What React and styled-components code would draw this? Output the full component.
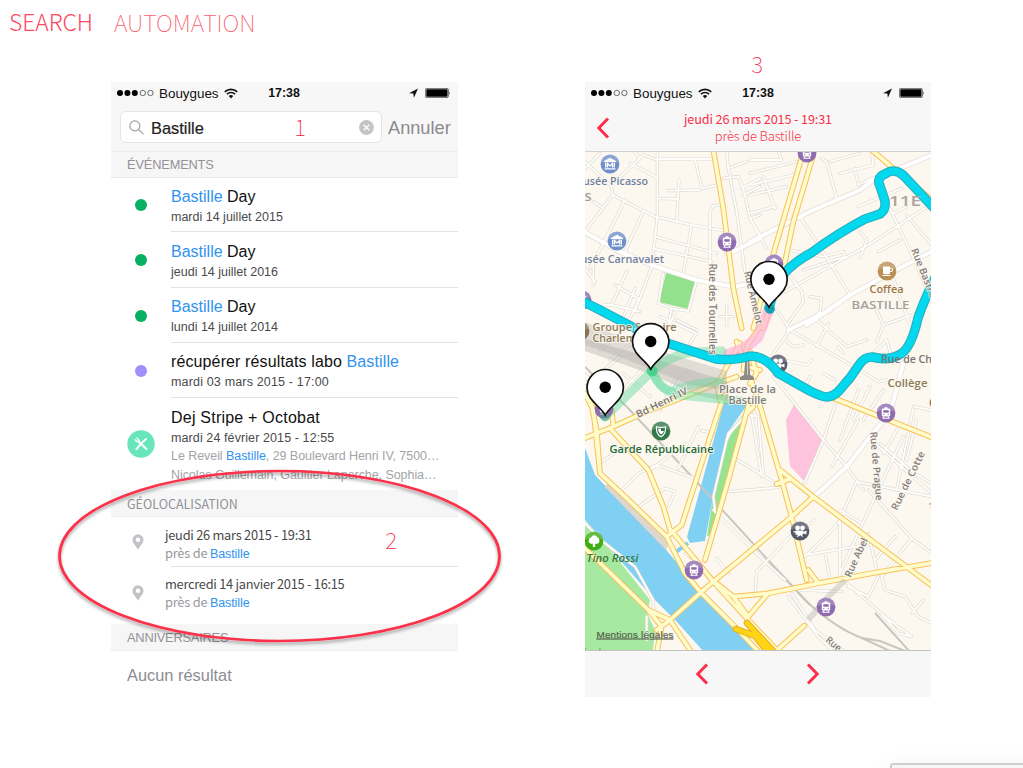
import React from "react";
import styled, { createGlobalStyle } from "styled-components";

const RED = "#fb3048";
const SOURCE = '"Noto Sans CJK SC", "Open Sans", sans-serif';
const HELV = '"Liberation Sans", Arial, sans-serif';

const Global = createGlobalStyle`
  * { box-sizing: border-box; }
  html, body { margin: 0; padding: 0; background: #fff; overflow: hidden; }
  body { font-family: ${HELV}; }
  svg { display: block; }
`;

const Page = styled.main`
  position: relative;
  width: 1023px;
  height: 768px;
  overflow: hidden;
  background: #fff;
`;

const TopNav = styled.nav`
  display: flex;
  gap: 21px;
  height: 82px;
  padding: 6px 0 0 9px;
`;

const NavItem = styled.a`
  font: ${(p) => (p.$active ? 300 : 100)} ${(p) => (p.$active ? 22.8 : 23.4)}px/32px ${SOURCE};
  color: ${(p) => (p.$active ? "#fb4a5e" : "#fb5c6e")};
`;

const Screens = styled.div`
  display: flex;
  gap: 127px;
  padding-left: 111px;
`;

const Phone = styled.section`
  display: flex;
  flex-direction: column;
  width: ${(p) => p.$width}px;
  height: 615px;
  background: #fff;

  > * {
    flex-shrink: 0;
  }
`;

const Head = styled.header`
  height: ${(p) => p.$height}px;
  background: #f7f7f7;
  border-bottom: 1px solid ${(p) => p.$line};
`;

const StatusBar = styled.div`
  display: grid;
  grid-template-columns: 1fr auto 1fr;
  align-items: center;
  height: 22px;
  padding: 0 ${(p) => p.$right}px 0 6px;
  color: #111;
  font-size: 13.4px;
`;

const Carrier = styled.div`
  display: flex;
  align-items: center;
  gap: 5px;
`;

const Clock = styled.span`
  font-weight: 700;
  font-size: 12.4px;
`;

const Indicators = styled.div`
  display: flex;
  align-items: center;
  justify-content: flex-end;
  gap: 7px;
`;

const SearchRow = styled.div`
  display: flex;
  align-items: center;
  gap: 6px;
  padding: 7px 0 0 9px;
`;

const SearchField = styled.div`
  display: flex;
  align-items: center;
  width: 262px;
  height: 32px;
  padding: 0 7px 0 8px;
  border: 1px solid #e4e4e6;
  border-radius: 6px;
  background: #fff;
`;

const Query = styled.span`
  flex: 1;
  padding: 2px 0 0 7px;
  font-size: 16.4px;
  color: #222;
  -webkit-text-stroke: 0.2px #222;
`;

const Cancel = styled.span`
  padding-top: 2px;
  font-size: 18.2px;
  color: #8a8a8f;
`;

const SectionTitle = styled.h2`
  display: flex;
  align-items: center;
  height: ${(p) => p.$height}px;
  margin: 0;
  padding: 1px 0 0 16px;
  background: #f6f6f6;
  border-bottom: 1px solid #ececec;
  font: 400 ${(p) => p.$size || 12.8}px/20px ${(p) => p.$font || HELV};
  letter-spacing: ${(p) => p.$track || 0}px;
  color: #929297;
`;

const Row = styled.article`
  display: grid;
  grid-template-columns: 60px 1fr;
  height: ${(p) => p.$height}px;
`;

const Marker = styled.div`
  display: flex;
  align-items: center;
  justify-content: center;
  padding-right: ${(p) => p.$inset || 0}px;
  padding-bottom: ${(p) => p.$lift || 0}px;
`;

const Dot = styled.i`
  width: 12px;
  height: 12px;
  border-radius: 50%;
  background: ${(p) => p.$color};
`;

const Details = styled.div`
  padding-top: ${(p) => p.$top || 9}px;
  border-bottom: ${(p) => (p.$last ? 0 : 1)}px solid #e3e3e5;
  white-space: nowrap;
`;

const Title = styled.div`
  font-size: 16px;
  line-height: 20px;
  letter-spacing: ${(p) => p.$track || 0}px;
  color: #111;
`;

const When = styled.div`
  font-size: 12.5px;
  line-height: 20px;
  letter-spacing: ${(p) => p.$track || 0}px;
  color: #4a4a4c;
`;

const Extra = styled.div`
  position: relative;
  top: -1px;
  font-size: 12.5px;
  line-height: 18.5px;
  letter-spacing: -0.06px;
  color: #a3a3a8;
`;

const Hit = styled.span`
  color: #2f93f0;
`;

const GeoText = styled.div`
  margin-left: -6px;
  font: 400 12.8px/18px ${SOURCE};
  letter-spacing: ${(p) => p.$track || 0}px;
  color: ${(p) => (p.$muted ? "#98989d" : "#484848")};
`;

const GeoHit = styled(Hit)`
  font: 400 12.5px/18px ${HELV};
  letter-spacing: -0.1px;
`;

const Empty = styled.p`
  margin: 0;
  padding: 14px 16px 0;
  font-size: 16.4px;
  line-height: 20px;
  color: #8c8c91;
`;

const TitleBar = styled.div`
  display: grid;
  grid-template-columns: 36px 1fr 36px;
  align-items: center;
  padding-top: 7px;
`;

const PlaceTitle = styled.div`
  text-align: center;
  font: 400 12.7px/16.5px ${SOURCE};
  letter-spacing: -0.15px;
  color: ${RED};
`;

const PlaceSub = styled.div`
  font-size: 13px;
  font-weight: 300;
`;

const BackSlot = styled.div`
  display: flex;
  padding: 0 0 0 11px;
`;

const Footer = styled.footer`
  display: flex;
  align-items: center;
  justify-content: center;
  gap: 97px;
  height: 47px;
  padding-right: 2px;
  border-top: 1px solid #c4c4c4;
  background: #f7f7f7;
`;

const Note = styled.span`
  position: absolute;
  left: ${(p) => p.$x}px;
  top: ${(p) => p.$y}px;
  width: 20px;
  text-align: center;
  font: 100 22.5px/32px ${SOURCE};
  color: #f4203c;
`;

const Highlight = styled.svg`
  position: absolute;
  left: 50px;
  top: 460px;
`;

const WindowEdge = styled.div`
  position: absolute;
  left: 890px;
  top: 763px;
  width: 160px;
  height: 40px;
  border: 2px solid #cfcfcf;
  border-radius: 3px;
  background: #f6f6f6;
  box-shadow: 0 4px 26px rgba(0, 0, 0, 0.07);
`;

/* ---------- icons ---------- */

const SignalDots = () => (
  <svg width="37" height="8" viewBox="0 0 37 8">
    {[0, 1, 2].map((i) => <circle key={i} cx={3 + i * 7.4} cy="4" r="3" fill="#000" />)}
    {[3, 4].map((i) => <circle key={i} cx={3 + i * 7.6} cy="4" r="2.7" fill="none" stroke="#333" strokeWidth=".7" />)}
  </svg>
);

const Wifi = () => (
  <svg width="14" height="11" viewBox="0 0 14 11" fill="none" stroke="#111" strokeWidth="1.7">
    <path d="M.8 3.9a8.8 8.8 0 0 1 12.4 0" />
    <path d="M3 6.2a5.6 5.6 0 0 1 8 0" />
    <path d="M7 10.4 4.8 8.1a3.1 3.1 0 0 1 4.4 0z" fill="#111" stroke="none" />
  </svg>
);

const LocationArrow = () => (
  <svg width="9" height="10" viewBox="0 0 9 10"><path d="M9 .4 0 5.2l4.3.4.6 4.2z" fill="#111" /></svg>
);

const Battery = () => (
  <svg width="26" height="10" viewBox="0 0 26 10">
    <rect x=".4" y=".4" width="23" height="9.2" rx="1.4" fill="none" stroke="#333" strokeWidth=".7" />
    <rect x="1.3" y="1.3" width="21.2" height="7.4" rx=".6" fill="#000" />
    <path d="M24.3 3.2q1.4 1.8 0 3.6z" fill="#222" />
  </svg>
);

const Magnifier = () => (
  <svg width="15" height="15" viewBox="0 0 15 15" fill="none" stroke="#a0a0a5" strokeWidth="1.2">
    <circle cx="5.9" cy="5.9" r="5" />
    <path d="m9.5 9.5 5 4.6" />
  </svg>
);

const Clear = () => (
  <svg width="15" height="15" viewBox="0 0 15 15">
    <circle cx="7.5" cy="7.5" r="7.4" fill="#c3c3c8" />
    <path d="m4.7 4.7 5.6 5.6m0-5.6-5.6 5.6" stroke="#fff" strokeWidth="1.3" />
  </svg>
);

const Chevron = ({ flip }) => (
  <svg width="14" height="24" viewBox="0 0 14 24">
    <path d={flip ? "M2 2.5 11.2 12 2 21.5" : "M12 2.5 2.8 12l9.2 9.5"} fill="none" stroke={RED} strokeWidth="3" />
  </svg>
);

const Lunch = () => (
  <svg width="28" height="28" viewBox="0 0 28 28">
    <circle cx="14" cy="14" r="13.7" fill="#68e6bb" />
    <g fill="none" stroke="#fff" strokeLinecap="round">
      <path d="M19 9q-5 4-9.700 10.300" strokeWidth="2" />
      <path d="m11.500 11.500 8 7.500" strokeWidth="2" />
      <path d="M8 9.600 10.500 12M9.800 7.900l2.700 2.600M8.700 10.700l3 1.500.4-.8-1.700-2.900" strokeWidth="1.100" />
    </g>
  </svg>
);

const GrayPin = () => (
  <svg width="12" height="16" viewBox="0 0 12 16">
    <path d="M6 .3a5.500 5.500 0 0 0-5.500 5.600C.5 9 3.400 10.800 6 15.700 8.600 10.800 11.500 9 11.500 5.900A5.500 5.500 0 0 0 6 .3zm0 3.200a2.300 2.300 0 1 1 0 4.600 2.300 2.300 0 0 1 0-4.600z" fill="#c2c2c7" fillRule="evenodd" />
  </svg>
);

/* ---------- map ---------- */

/* Street network, split in tiles; each tile is drawn at three units per pixel. */
const TILES = [
  {
    x: 580, y: 145,
    minor: "M15 50L95 125L98 150L225 215L335 240L440 258M98 150L15 260M15 70L60 25M232 20V215L215 365M95 120L190 30L232 45M150 55L232 98M180 40L160 15M232 42L395 42M345 42L365 130L415 120M265 137L360 135M297 105L290 225M232 160L295 162M135 165L75 285L30 370M190 200L135 320M225 275L410 325M225 312L395 350M335 240L310 385M390 360V200L400 182L430 180M430 100L475 95L490 130L510 220L540 270M440 20L445 70L470 200L495 380M445 70L500 50M485 130L540 100M490 150L540 125M510 220L540 210M215 365L180 460L145 530M105 420L175 460L165 500M140 380L95 480L180 500M165 430L120 540M350 405L325 498L275 490L235 475L250 385M275 490L265 540M15 370L45 410M40 340L40 420M40 170L70 190M440 480V540M420 515H460M95 480L70 480",
    major: "M15 262L120 320L215 360L350 405L460 425L540 410M540 280L470 315L440 325",
    yellow: "M400 15L430 190L460 430L485 550",
  },
  {
    x: 750, y: 145,
    minor: "M0 85L140 50M5 120L130 90M0 150L110 125M0 45L95 45L85 20M40 95L75 190M0 205L75 185M215 40L230 50L260 160M270 85L370 60L365 20M240 50L330 25M315 70L325 120L365 100M150 215L225 330L300 450M115 315L220 335L280 320L285 335L160 375M105 440L355 300L540 180M330 260L350 285L330 340M385 320L450 285M0 220L50 310M325 185L455 130M345 220L415 180M415 180L500 360L545 470M110 380L155 440L160 470L110 540M180 455L215 460L210 500L170 540M430 400L480 540M470 210L545 300M430 205L470 185",
    major: "M0 290L190 195L330 135L375 100L545 30M170 540L300 450L420 385L543 320",
    yellow: "M160 20L75 310L10 550M190 30L130 230L105 350L40 550M365 15L430 70L545 165",
  },
  {
    x: 580, y: 310,
    minor: "M15 180L90 260M60 120L130 60M90 150L180 80M120 250L230 130M130 190L210 260M240 20L350 70L330 100M350 60L290 30M290 0L250 80M320 180L250 280M290 200L240 300M15 220L60 190L120 140M400 370L365 362M500 310L450 370L440 390",
    yellow: "M15 384L100 350L200 305L400 225L470 200M15 250L40 300L60 490M30 262L50 360L60 490M95 300L100 345M480 100L440 170L412 225L420 270M540 50L500 110L490 180M470 95L500 170L540 180M520 290L500 310",
  },
  {
    x: 750, y: 310,
    minor: "M70 200L220 390L290 470L340 540M163 520L220 390L260 270M245 470L325 330M50 160L120 60L80 0M120 60L330 180L385 215L410 210M190 20L290 110L350 90M235 40L200 110M380 0L400 45L380 95M400 45L500 10M105 90L130 110L160 105M100 150L170 165L185 150M220 190L255 210M265 110L280 130M180 200L160 240M325 240L270 390M360 230L310 330M400 240L340 330M210 290L240 250M390 400L480 480L543 520M450 345L400 430M490 295L440 540M490 290L543 300M500 330L470 450M0 315L25 320L40 490M430 160L410 90L370 130M0 290L20 320",
    major: "M115 60L240 0M215 540L290 470L360 380L420 310L460 160",
    yellow: "M250 264L545 382M0 205L25 270M0 125L20 190L0 220",
  },
  {
    x: 585, y: 400,
    minor: "M450 175L580 255M500 45L530 230M430 275L580 262M45 190L100 150M110 270L160 220L215 195L330 235M160 320L240 265L270 275L250 320M190 215L300 130M280 205L340 80M385 330L545 490L600 540M395 475L430 520M300 460L340 490M510 590L515 515L620 405L690 360M850 270L980 415L1040 460M870 130L1040 280M955 110L870 290L765 520M815 245L1040 290M815 245L760 370M765 330L830 370M765 330V540M755 375L660 470M660 465L840 435M720 455L735 540M850 400L880 530L850 590L790 560M980 415L890 530L900 570L960 590L1000 650L1040 670M780 545L900 650L980 710L940 700L890 640M930 410L870 480M610 590L700 710L740 750M620 580L690 690L780 755M640 570L770 575M1015 600L980 640M0 370L60 430L150 500L205 600V650M185 650V720M480 50L430 100L385 290L390 330",
    major: "M685 290L715 265",
    yellow: "M45 220L120 290L245 410L300 520L350 580L450 680L530 765M75 85L190 210L235 320L258 400M420 -15L405 20L340 220L290 375L245 410M258 390L385 545L485 655L580 755M492 10L430 240L360 480M520 0L590 240L620 350L665 540M585 210L685 290L870 430L1045 560M575 252L612 238M-5 440L190 630L255 660L325 765M190 630L230 680L215 760M255 660L215 690M255 660L350 575L385 545L500 450L620 350L685 290M395 550L445 590L550 580L700 550L870 518L1045 488M445 590L490 650L545 585M670 510L700 550M582 745L658 677",
  },
];

const ROAD_PASSES = [
  { kind: "minor", color: "#dedad3", width: 9.5 },
  { kind: "major", color: "#e2ddd4", width: 16 },
  { kind: "minor", color: "#fffefb", width: 5.5 },
  { kind: "major", color: "#ffffff", width: 12 },
  { kind: "yellow", color: "#f9c056", width: 17 },
  { kind: "yellow", color: "#fffccb", width: 11 },
];

const RAILS = [
  "M627 407L695 480L768 560L805 600Q835 628 862 638L890 651",
  "M585 367L627 407M875 613L910 652M862 638L880 641L905 651",
  "M765 557L810 605",
];

const ROUTE =
  "M769 308C772 296 776 286 783 275C789 267 800 259 811 253C830 239 846 229 865 219L880 214Q886 210 885 201L880 186C877 180 880 176 885 174C892 169 899 171 904 176L936 210M936 276C929 291 924 300 918 318C914 336 908 351 899 355Q888 361 872 357Q864 357 859 365L850 378C842 386 838 396 827 397Q822 397 810 391L778 373Q766 356 750 356Q734 361 716 359L667 343L640 331L598 309L582 301";

const POI_COLORS = { museum: "#6f8fcb", train: "#8f6bb0", coffee: "#b98f54", camera: "#525866", shield: "#34784a", tree: "#3fae14", school: "#8a7352" };

const POIS = [
  ["museum", 610, 164], ["museum", 617, 241], ["train", 727, 242], ["train", 807, 153],
  ["train", 774, 264], ["train", 886, 413], ["train", 694, 570], ["train", 826, 607],
  ["train", 604, 409], ["train", 582, 300], ["coffee", 887, 271], ["camera", 778, 364],
  ["camera", 800, 531], ["shield", 661, 431], ["tree", 594, 541], ["school", 580, 331],
];

const Glyph = ({ kind }) => {
  switch (kind) {
    case "museum":
      return (
        <g fill="#fff">
          <path d="M0-6.200 6-3v1.200H-6V-3zM-5.500 4.200h11v1.400h-11zM-5-1h1.500v4.600H-5zM3.500-1H5v4.600H3.500z" />
          <path d="M-2.400 3.500v-4L0 2l2.400-2.500v4" fill="none" stroke="#fff" strokeWidth="1.200" />
        </g>
      );
    case "train":
      return (
        <g>
          <path d="M-1.500-5.800h3v1.300H3q1.200 0 1.200 1.200v5.500Q4.200 3.500 3 3.500h-6q-1.200 0-1.200-1.300v-5.500q0-1.200 1.200-1.200h1.500zM-3.800 5.800l1-2h1.300l-.5 1h4l-.5-1h1.300l1 2z" fill="#fff" />
          <path d="M-2.700-2.800h5.400v2.500h-5.400z" fill="#8f6bb0" />
          <circle cx="-2.200" cy="1.600" r=".7" fill="#8f6bb0" /><circle cx="2.200" cy="1.600" r=".7" fill="#8f6bb0" />
        </g>
      );
    case "coffee":
      return (
        <g>
          <path d="M-4-4.500h7V2Q3 3.300 1.500 3.300h-4Q-4 3.300-4 2zM-4.500 4h8v1.100h-8z" fill="#fff" />
          <path d="M3-2.800h1.200q1.400 0 1.400 1.500T4.200.4H3" fill="none" stroke="#fff" strokeWidth="1.100" />
        </g>
      );
    case "camera":
      return (
        <g fill="#fff">
          <circle cx="-2.400" cy="-3" r="2.400" /><circle cx="2.500" cy="-3" r="2.400" />
          <path d="M-4.500-.5h7.700v1.300L6.500-.6v4L3.200 2.200v1.600h-1.500l1.600 2H2L.5 4.300-2 5.800h-1.500l1.600-2h-2.600zM-6.500.3h2v1.200h-2z" />
        </g>
      );
    case "shield":
      return (
        <g fill="none" stroke="#fff">
          <path d="M-4.500-4.300Q0-2.800 4.500-4.300C5 1 3.500 3.800 0 5.800-3.500 3.800-5 1-4.500-4.300z" strokeWidth="1.200" />
          <path d="M0-2.500Q-1.500-2-3-2.300-3 1 0 3.500zM0 0h3Q2.500 2.300 0 3.500z" fill="#fff" stroke="none" />
        </g>
      );
    case "tree":
      return <path d="M-1.200 6V2.500Q-3 3.300-4.500 2T-5-1.500Q-4.500-3.500-2.700-3.700-1.800-6 .5-5.800T3.400-3.500Q5.500-3 5.500-.5T3.500 2.600Q2.200 3.200 1.200 2.500V6z" fill="#fff" />;
    default:
      return null;
  }
};

const Poi = ({ kind, x, y }) => (
  <g transform={`translate(${x} ${y})`}>
    <circle r="9.400" fill={POI_COLORS[kind]} />
    <path d="M-9-1.500A9 9 0 0 1 9-1.500Q0-4 -9-1.500z" fill="#fff" opacity=".2" />
    <Glyph kind={kind} />
  </g>
);

const Pin = ({ x, y }) => (
  <g transform={`translate(${x} ${y})`}>
    <path d="M0 27.800C-5 18.500-18.200 13-18.200.4a18.200 18.200 0 1 1 36.400 0C18.200 13 5 18.500 0 27.800z" fill="#fff" stroke="#111" strokeWidth="1.700" />
    <circle r="5.700" fill="#000" />
  </g>
);

const MapLabel = styled.text`
  font-family: "Open Sans", Lato, sans-serif;
  font-weight: 600;
  font-size: ${(p) => p.$size || 9.8}px;
  font-style: ${(p) => (p.$italic ? "italic" : "normal")};
  fill: ${(p) => p.$color || "#85817d"};
  paint-order: stroke;
  stroke: #fdf9f2;
  stroke-opacity: ${(p) => (p.$plain ? 0 : 0.75)};
  stroke-width: 2px;
`;

const LegalLink = styled.text`
  font: 400 9.800px ${HELV};
  fill: #55604f;
  stroke: #55604f;
  stroke-width: 0.2px;
  text-decoration: underline;
`;

const LABELS = [
  { t: "usée Picasso", x: 583, y: 185, w: 65, c: "#7280a0" },
  { t: "S", x: 584.5, y: 201, w: 7, c: "#9d9a96", plain: true },
  { t: "usée Carnavalet", x: 580.5, y: 262.5, w: 83.5, c: "#7280a0" },
  { t: "11E", x: 889, y: 205.5, w: 32, c: "#aaa59f", s: 15, plain: true },
  { t: "Coffea", x: 869.5, y: 293, w: 34, c: "#9a7742" },
  { t: "BASTILLE", x: 851.5, y: 309, w: 58, c: "#a5a19b", s: 10.5, plain: true },
  { t: "Groupe Scolaire", x: 592.5, y: 331, w: 84, c: "#8d7b58" },
  { t: "Charlemagne", x: 592.5, y: 342, w: 68, c: "#8d7b58" },
  { t: "Place de la", x: 719, y: 392.5, w: 57, c: "#7f7c79" },
  { t: "Bastille", x: 728.5, y: 403.500, w: 38, c: "#7f7c79" },
  { t: "Garde Républicaine", x: 609.5, y: 453, w: 104, c: "#246b38" },
  { t: "Collège", x: 887.5, y: 387, w: 40, c: "#8d7b58" },
  { t: "Tino Rossi", x: 586.5, y: 562, w: 52, c: "#37793b", it: true, plain: true },
  { t: "Rue de Ch", x: 881, y: 363, w: 51, c: "#77736f", over: true, plain: true },
  { t: "(", x: 929, y: 406, w: 5, c: "#8d7b58" },
  { t: "Bd Henri IV", x: 638, y: 418, w: 56, c: "#77736f", r: -26, s: 10 },
  { t: "Rue des Tournelles", x: 709, y: 263.5, w: 91, c: "#858079", r: 90 },
  { t: "Rue Amelot", x: 744, y: 272, w: 54, c: "#858079", r: 77 },
  { t: "Rue Basfroi", x: 911, y: 250, w: 55, c: "#858079", r: 68 },
  { t: "Rue de Prague", x: 870, y: 432, w: 69, c: "#858079", r: 85 },
  { t: "Rue de Cotte", x: 897, y: 511, w: 64, c: "#858079", r: -64 },
  { t: "Rue Abel", x: 850.5, y: 578, w: 42, c: "#858079", r: -65 },
  { t: "Rue", x: 825, y: 641, w: 17, c: "#858079", r: 40 },
  { t: "Rue", x: 929, y: 503, w: 17, c: "#858079", r: 70 },
  { t: "Plantes", x: 577, y: 656, w: 36, c: "#3c7f3e", plain: true },
];

const tileTransform = (tile) => `translate(${tile.x} ${tile.y}) scale(.33333)`;

const ParisMap = () => (
  <svg width="346" height="498" viewBox="585 152 346 498">
    <rect x="585" y="152" width="346" height="498" fill="#fcf7ef" />
    <path d="M666 273L696 281L688 309L659 302z" fill="#93e08d" />
    <path d="M585 522L605 543L650 600L647 613L655 630L653 650H585z" fill="#a7e9a0" />
    <path d="M795 402.500L823.500 440L804.500 481.500L790 466L786 420z" fill="#fec3dd" />
    <path d="M585 448L595 475L668 552L702 593L760 652H704L677 622L655 600L605 543L585 520z" fill="#80d0f3" />
    <path d="M604 486L612 484L668 540L666 550z" fill="#dcd8d1" stroke="#c9c5be" strokeWidth=".6" />
    <path d="M724 402L747 405L728 432L712 503L705 541L690 543L687 537z" fill="#80d0f3" />
    <path d="M747 410L728 433L713 497L707 536L712 535L720 507L748 417z" fill="#98e38f" />
    <path d="M676 552L688 543" stroke="#80d0f3" strokeWidth="4" />
    {RAILS.map((d) => <path key={d} d={d} fill="none" stroke="#c9c6c2" strokeWidth="2" />)}
    {ROAD_PASSES.map((pass) => (
      <g key={pass.kind + pass.color} fill="none" stroke={pass.color} strokeWidth={pass.width} strokeLinejoin="round" strokeLinecap="round">
        {TILES.filter((t) => t[pass.kind]).map((t) => <path key={t.x + "-" + t.y} d={t[pass.kind]} transform={tileTransform(t)} />)}
      </g>
    ))}
    <path d="M808 620L828 597L845 580" fill="none" stroke="#bdb9b5" strokeWidth="6" opacity=".45" />
    <path d="M585 339L625 350L727 381L729 402L700 396L645 372L585 351z" fill="#aaa6a2" opacity=".36" />
    <path d="M585 322L640 345L727 371L727 390L690 385L620 357L585 345z" fill="#aaa6a2" opacity=".33" />
    <g fill="none" strokeLinecap="round">
      <path d="M736 629L755 636L768 652M747 623L774 652" stroke="#dfa51c" strokeWidth="6.500" />
      <path d="M736 629L755 636L768 652M747 623L774 652" stroke="#ffd416" strokeWidth="4.800" />
      <path d="M769 309L758 337Q745 350 729 354" stroke="#ffaeda" strokeWidth="11" opacity=".65" />
    </g>
    <g fill="none" stroke="#4fd996" strokeWidth="9" strokeLinecap="round" opacity=".4">
      <path d="M605 417L652 371Q674 353 695 352L722 351" />
      <path d="M652 371Q660 391 680 395L740 401" />
    </g>
    <path d="M652 371Q660 391 672 391Q700 380 724 382" fill="none" stroke="#4fd996" strokeWidth="8.500" opacity=".35" />
    <circle cx="652" cy="371" r="5.500" fill="#22cc79" opacity=".6" />
    <path d="M745.500 357h3.500l1.200 18 3.800 2v3h-14v-3l4-2z" fill="#8e8a86" />
    <path d="M747.500 360v15" stroke="#cfccc8" strokeWidth="1.200" />
    {POIS.map(([kind, x, y]) => <Poi key={kind + x + y} kind={kind} x={x} y={y} />)}
    <g fill="none" strokeLinejoin="round" strokeLinecap="round">
      <path d={ROUTE} stroke="#13a9bb" strokeWidth="9.600" opacity=".92" />
      <path d={ROUTE} stroke="#00dcf2" strokeWidth="7.400" opacity=".92" />
    </g>
    <circle cx="770" cy="309" r="4.800" fill="#129fb4" />
    <circle cx="605" cy="416" r="5" fill="#4d9b84" opacity=".6" />
    {LABELS.map((l) => (
      <MapLabel
        key={l.t + l.x}
        x={l.x}
        y={l.y}
        textLength={l.w}
        lengthAdjust="spacingAndGlyphs"
        transform={l.r ? `rotate(${l.r} ${l.x} ${l.y})` : undefined}
        $color={l.c}
        $size={l.s}
        $italic={l.it}
        $plain={l.plain}
      >
        {l.t}
      </MapLabel>
    ))}
    <Pin x={769} y={279.300} />
    <Pin x={650.700} y={341.500} />
    <Pin x={605.200} y={387.300} />
    <LegalLink x="596.500" y="637.500" textLength="77">Mentions légales</LegalLink>
  </svg>
);

/* ---------- screens ---------- */

const Status = ({ right }) => (
  <StatusBar $right={right}>
    <Carrier><SignalDots />Bouygues<Wifi /></Carrier>
    <Clock>17:38</Clock>
    <Indicators><LocationArrow /><Battery /></Indicators>
  </StatusBar>
);

const EVENTS = [
  { color: "#07b062", title: <><Hit>Bastille</Hit> Day</>, when: "mardi 14 juillet 2015", h: 54, top: 9 },
  { color: "#07b062", title: <><Hit>Bastille</Hit> Day</>, when: "jeudi 14 juillet 2016", h: 56, top: 10 },
  { color: "#07b062", title: <><Hit>Bastille</Hit> Day</>, when: "lundi 14 juillet 2014", h: 55, top: 9 },
  { color: "#a18ffb", title: <>récupérer résultats labo <Hit>Bastille</Hit></>, when: "mardi 03 mars 2015 - 17:00", h: 55, top: 9, track: 0.12, whenTrack: 0.17 },
];

const SearchScreen = () => (
  <Phone $width={347}>
    <Head $height={70} $line="#ececec">
      <Status right={7} />
      <SearchRow>
        <SearchField><Magnifier /><Query>Bastille</Query><Clear /></SearchField>
        <Cancel>Annuler</Cancel>
      </SearchRow>
    </Head>
    <SectionTitle $height={26} $track={-0.15}>ÉVÉNEMENTS</SectionTitle>
    {EVENTS.map((e) => (
      <Row key={e.when} $height={e.h}>
        <Marker><Dot $color={e.color} /></Marker>
        <Details $top={e.top}><Title $track={e.track}>{e.title}</Title><When $track={e.whenTrack}>{e.when}</When></Details>
      </Row>
    ))}
    <Row $height={92}>
      <Marker><Lunch /></Marker>
      <Details $last $top={10}>
        <Title $track={0.22}>Dej Stripe + Octobat</Title>
        <When $track={0.1}>mardi 24 février 2015 - 12:55</When>
        <Extra>Le Reveil <Hit>Bastille</Hit>, 29 Boulevard Henri IV, 7500…</Extra>
        <Extra>Nicolas Guillemain, Gaultier Laperche, Sophia…</Extra>
      </Details>
    </Row>
    <SectionTitle $height={27} $font={SOURCE} $size={12.5}>GÉOLOCALISATION</SectionTitle>
    <Row $height={50}>
      <Marker $inset={6}><GrayPin /></Marker>
      <Details>
        <GeoText $track={-0.25}>jeudi 26 mars 2015 - 19:31</GeoText>
        <GeoText $track={-0.2} $muted>près de <GeoHit>Bastille</GeoHit></GeoText>
      </Details>
    </Row>
    <Row $height={57}>
      <Marker $inset={6} $lift={6}><GrayPin /></Marker>
      <Details $last $top={8}>
        <GeoText $track={-0.26}>mercredi 14 janvier 2015 - 16:15</GeoText>
        <GeoText $track={-0.2} $muted>près de <GeoHit>Bastille</GeoHit></GeoText>
      </Details>
    </Row>
    <SectionTitle $height={27} $track={-0.2}>ANNIVERSAIRES</SectionTitle>
    <Empty>Aucun résultat</Empty>
  </Phone>
);

const MapScreen = () => (
  <Phone $width={346}>
    <Head $height={70} $line="#d2d2d2">
      <Status right={6} />
      <TitleBar>
        <BackSlot><Chevron /></BackSlot>
        <PlaceTitle>jeudi 26 mars 2015 - 19:31<PlaceSub>près de Bastille</PlaceSub></PlaceTitle>
      </TitleBar>
    </Head>
    <ParisMap />
    <Footer><Chevron /><Chevron flip /></Footer>
  </Phone>
);

export default function App() {
  return (
    <Page>
      <Global />
      <TopNav>
        <NavItem $active>SEARCH</NavItem>
        <NavItem>AUTOMATION</NavItem>
      </TopNav>
      <Screens>
        <SearchScreen />
        <MapScreen />
      </Screens>
      <Highlight width="460" height="200" viewBox="50 460 460 200">
        <defs>
          <filter id="soft" x="-5%" y="-5%" width="110%" height="115%">
            <feDropShadow dx="0" dy="2.500" stdDeviation="1.800" floodColor="#000" floodOpacity=".35" />
          </filter>
        </defs>
        <ellipse cx="279.500" cy="556" rx="220" ry="85" fill="none" stroke={RED} strokeWidth="2.700" filter="url(#soft)" />
      </Highlight>
      <Note $x={290} $y={110}>1</Note>
      <Note $x={381} $y={523}>2</Note>
      <Note $x={747} $y={47}>3</Note>
      <WindowEdge />
    </Page>
  );
}
